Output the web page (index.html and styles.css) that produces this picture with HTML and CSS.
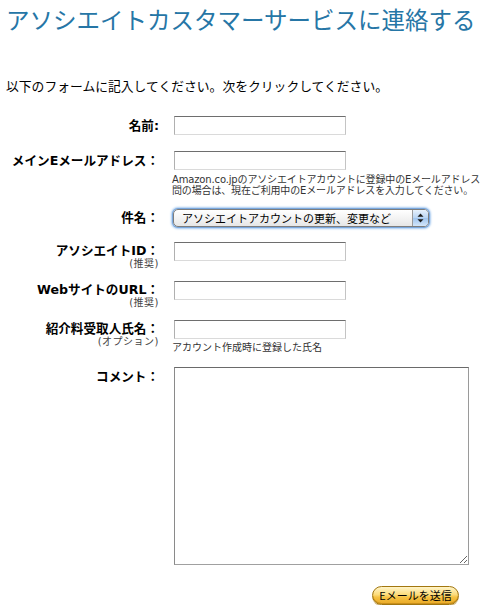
FILE: index.html
```html
<!DOCTYPE html>
<html lang="ja">
<head>
    <meta charset="UTF-8">
    <meta name="viewport" content="width=device-width, initial-scale=1.0">
    <title>アソシエイトカスタマーサービスに連絡する</title>
    <link rel="stylesheet" href="styles.css">
</head>
<body>
    <h1 class="title">アソシエイトカスタマーサービスに連絡する</h1>
    <p class="intro">以下のフォームに記入してください。次をクリックしてください。</p>

    <form class="contact-form" onsubmit="return false;">
        <div class="row row-name">
            <label class="label" for="name">名前:</label>
            <div class="field"><input id="name" class="text-input" type="text"></div>
        </div>

        <div class="row row-email">
            <label class="label" for="email">メインEメールアドレス：</label>
            <div class="field">
                <input id="email" class="text-input" type="text">
                <div class="hint">Amazon.co.jpのアソシエイトアカウントに登録中のEメールアドレス<br>問の場合は、現在ご利用中のEメールアドレスを入力してください。</div>
            </div>
        </div>

        <div class="row row-subject">
            <label class="label" for="subject">件名：</label>
            <div class="field">
                <div class="select-wrap">
                    <select id="subject" class="select">
                        <option>アソシエイトアカウントの更新、変更など</option>
                    </select>
                    <!-- stepper arrows drawn over the select -->
                    <span class="select-arrows">
                        <svg width="7" height="10" viewBox="0 0 7 10">
                            <path d="M3.5 0.5 L6.5 3.8 L0.5 3.8 Z" fill="#1a1a1a"/>
                            <path d="M3.5 9.5 L6.5 6.2 L0.5 6.2 Z" fill="#1a1a1a"/>
                        </svg>
                    </span>
                </div>
            </div>
        </div>

        <div class="row row-id">
            <label class="label" for="assoc-id">アソシエイトID：<small>(推奨)</small></label>
            <div class="field"><input id="assoc-id" class="text-input" type="text"></div>
        </div>

        <div class="row row-url">
            <label class="label" for="site-url">WebサイトのURL：<small>(推奨)</small></label>
            <div class="field"><input id="site-url" class="text-input" type="text"></div>
        </div>

        <div class="row row-payee">
            <label class="label" for="payee">紹介料受取人氏名：<small>(オプション)</small></label>
            <div class="field">
                <input id="payee" class="text-input" type="text">
                <div class="hint hint-payee">アカウント作成時に登録した氏名</div>
            </div>
        </div>

        <div class="row row-comment">
            <label class="label" for="comment">コメント：</label>
            <div class="field"><textarea id="comment" class="textarea"></textarea></div>
        </div>

        <div class="row row-submit">
            <div></div>
            <div class="field submit-field">
                <button class="send-button" type="submit">Eメールを送信</button>
            </div>
        </div>
    </form>
</body>
</html>
```

FILE: styles.css
```css
body {
    margin: 0;
    padding: 0 0 0 6px;
    background-color: #fff;
    color: #000;
    font-family: 'DejaVu Sans', 'Noto Sans CJK JP', sans-serif;
    overflow: hidden;
}
.title {
    margin: 0;
    padding-top: 5px;
    font-family: 'Noto Sans CJK JP', sans-serif;
    font-size: 23.5px;
    line-height: 28px;
    font-weight: normal;
    color: #2676a6;
    white-space: nowrap;
}
.intro {
    margin: 45px 0 0;
    font-family: 'Noto Sans CJK JP', sans-serif;
    font-size: 12.8px;
    line-height: 16px;
}
.contact-form {
    margin-top: 22px;
}
.row {
    display: grid;
    grid-template-columns: 153px 1fr;
    column-gap: 15px;
    align-items: start;
}
.label {
    text-align: right;
    font-size: 12.6px;
    font-weight: bold;
    line-height: 19px;
    white-space: nowrap;
}
.label small {
    display: block;
    margin-top: -1px;
    font-size: 10px;
    font-weight: normal;
    line-height: 10px;
    letter-spacing: 0.5px;
    color: #444;
}
.row-name { margin-bottom: 16px; }
.row-email { margin-bottom: 12px; }
.row-subject { margin-bottom: 15px; }
.row-id, .row-url { margin-bottom: 12px; }
.row-id .label, .row-url .label, .row-payee .label { line-height: 18px; }
.row-payee { margin-bottom: 15px; }
.row-comment { margin-bottom: 21px; }

.field {
    min-width: 0;
}
.text-input {
    display: block;
    box-sizing: border-box;
    width: 172px;
    height: 19px;
    margin: 0;
    padding: 0 3px;
    border: 1px solid;
    border-color: #6e6e6e #c4c4c4 #dadada #b0b0b0;
    font-size: 12px;
    outline: none;
}
.hint {
    margin: 4px 0 0 -2px;
    font-size: 10px;
    line-height: 11px;
    letter-spacing: -0.15px;
    color: #333;
    white-space: nowrap;
}
.hint-payee {
    margin-top: 2px;
    letter-spacing: 0;
    font-family: 'Noto Sans CJK JP', sans-serif;
}

/* 件名 select */
.select-wrap {
    position: relative;
    width: 256px;
    height: 18px;
    margin: 1px 0 0 -1px;
    border-radius: 5px;
    box-shadow: 0 0 0 1px #7aa7dc, 0 0 2px 2px #a9cbf0;
}
.select {
    appearance: none;
    -webkit-appearance: none;
    display: block;
    box-sizing: border-box;
    width: 100%;
    height: 18px;
    margin: 0;
    padding: 0 0 0 8px;
    border: 1px solid #7d7d7d;
    border-radius: 5px;
    background: linear-gradient(#ffffff, #f1f1f1 60%, #e6e6e6);
    font-family: 'Noto Sans CJK JP', sans-serif;
    font-size: 11px;
    line-height: 16px;
    color: #000;
    outline: none;
}
.select-arrows {
    position: absolute;
    top: 1px;
    right: 1px;
    bottom: 1px;
    width: 15px;
    display: flex;
    align-items: center;
    justify-content: center;
    border-left: 1px solid #9a9a9a;
    border-radius: 0 4px 4px 0;
    background: linear-gradient(#e7f1fc, #b8d4f3 50%, #9fc4ee 51%, #d3e6fa);
    pointer-events: none;
}

.textarea {
    display: block;
    box-sizing: border-box;
    width: 295px;
    height: 198px;
    margin: 0;
    border: 1px solid;
    border-color: #6a6a6a #9a9a9a #a0a0a0 #8a8a8a;
    outline: none;
}

.submit-field {
    width: 295px;
    display: flex;
    justify-content: flex-end;
}
.send-button {
    box-sizing: border-box;
    width: 87px;
    height: 19px;
    margin-right: 10px;
    padding: 0;
    border: 1px solid #a27710;
    border-radius: 10px;
    background: linear-gradient(#fff4c8, #fcdc7c 45%, #f6c243 60%, #e9a926);
    box-shadow: inset 0 -1px 0 #c98f1a, 0 1px 0 #d9c08a;
    font-family: 'Noto Sans CJK JP', sans-serif;
    font-size: 11px;
    line-height: 17px;
    color: #000;
    cursor: pointer;
}
```
